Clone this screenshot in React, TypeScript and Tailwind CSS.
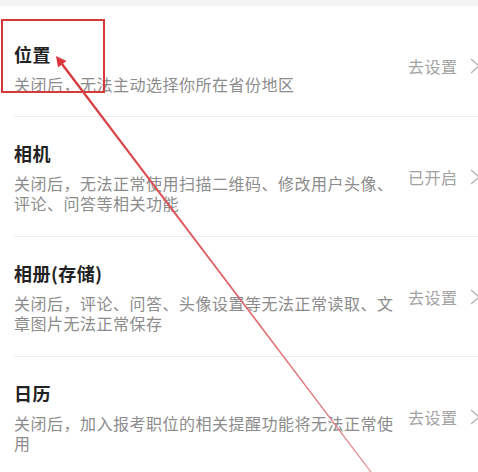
import React from 'react';

interface PermissionItem {
  title: string;
  desc: string;
  status: string;
}

const items: PermissionItem[] = [
  { title: '位置', desc: '关闭后，无法主动选择你所在省份地区', status: '去设置' },
  { title: '相机', desc: '关闭后，无法正常使用扫描二维码、修改用户头像、评论、问答等相关功能', status: '已开启' },
  { title: '相册(存储)', desc: '关闭后，评论、问答、头像设置等无法正常读取、文章图片无法正常保存', status: '去设置' },
  { title: '日历', desc: '关闭后，加入报考职位的相关提醒功能将无法正常使用', status: '去设置' },
];

const Chevron = () => (
  <svg width="12" height="16" viewBox="0 0 12 16" fill="none" className="shrink-0">
    <path d="M2 1 L10 8 L2 15" stroke="#b4b4b4" strokeWidth="1.4" strokeLinejoin="miter" />
  </svg>
);

const Row = ({ item, first }: { item: PermissionItem; first: boolean }) => (
  <div className={first ? 'h-[111px] pl-[14px]' : 'h-[120px] pl-[14px]'}>
    <div
      className={
        first
          ? 'flex h-full items-start border-b border-[#ececec] pt-[36px]'
          : 'flex h-full items-center border-b border-[#ececec]'
      }
    >
      <div className="w-[390px] shrink-0">
        <div className="text-[18px] font-bold leading-[24px] tracking-[0.5px] text-[#222]">{item.title}</div>
        <div className="mt-[8px] text-[16px] leading-[20px] tracking-[0.5px] text-[#8c8c8c]">{item.desc}</div>
      </div>
      <div className={first ? 'ml-[4px] mt-[14px] flex items-center gap-[11px]' : 'ml-[4px] flex items-center gap-[11px]'}>
        <span className="whitespace-nowrap text-[16px] leading-[20px] tracking-[0.5px] text-[#a2a2a2]">{item.status}</span>
        <Chevron />
      </div>
    </div>
  </div>
);

const Annotation = () => (
  <svg className="pointer-events-none absolute left-0 top-0" width="478" height="472" viewBox="0 0 478 472">
    <defs>
      <linearGradient id="fade" x1="62" y1="64" x2="371" y2="472" gradientUnits="userSpaceOnUse">
        <stop offset="0" stopColor="#d8383b" />
        <stop offset="1" stopColor="#e2868c" />
      </linearGradient>
    </defs>
    <polygon points="63,63.2 61,64.8 371,473 372,472.5" fill="url(#fade)" />
    <polygon points="56,56 66.5,61 58,67.5" fill="#d8383b" />
  </svg>
);

export default function App() {
  return (
    <div className="relative h-[472px] w-[478px] overflow-hidden bg-white font-['Noto_Sans_CJK_SC','Noto_Sans',sans-serif]">
      <div className="h-[6px] bg-[#f4f4f4]" />
      {items.map((item, i) => (
        <Row key={item.title} item={item} first={i === 0} />
      ))}
      <div className="pointer-events-none absolute left-[1px] top-[19px] h-[74px] w-[104px] border-2 border-[#d6393c]" />
      <Annotation />
    </div>
  );
}
